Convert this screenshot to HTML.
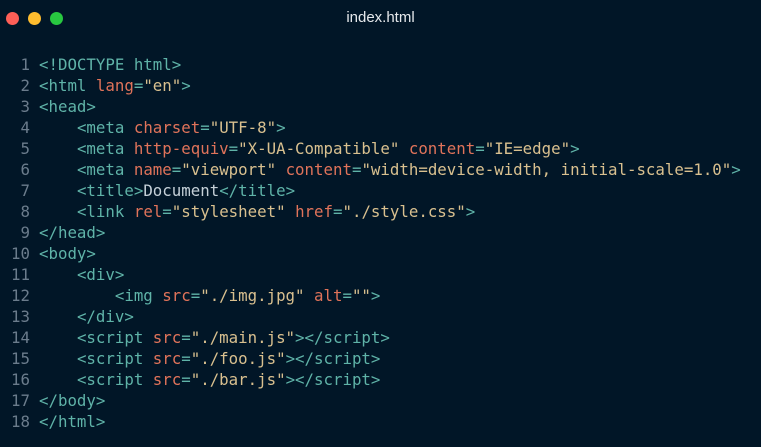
<!DOCTYPE html>
<html><head><style>
html,body{margin:0;padding:0;background:#011627;width:761px;height:447px;overflow:hidden}
.dot{position:absolute;top:12px;width:13px;height:13px;border-radius:50%}
.title{position:absolute;top:9px;left:0;width:761px;text-align:center;color:#e6e9ec;font:15px "Liberation Sans",sans-serif}
pre{position:absolute;left:0;top:54px;margin:0;font:15.76px/21px "DejaVu Sans Mono",monospace;color:#c5d0d8}
.n{display:inline-block;width:30px;text-align:right;color:#6b7c8c;margin-right:9px}
.t{color:#5fb3a8}.a{color:#e0735a}.s{color:#d9c08f}
</style></head><body>
<div class="dot" style="left:6px;background:#fe5f57"></div>
<div class="dot" style="left:28px;background:#febc2e"></div>
<div class="dot" style="left:50px;background:#28c840"></div>
<div class="title">index.html</div>
<pre><span class="n">1</span><span class="t">&lt;!DOCTYPE html&gt;</span>
<span class="n">2</span><span class="t">&lt;html </span><span class="a">lang</span><span class="t">=</span><span class="s">"en"</span><span class="t">&gt;</span>
<span class="n">3</span><span class="t">&lt;head&gt;</span>
<span class="n">4</span>    <span class="t">&lt;meta </span><span class="a">charset</span><span class="t">=</span><span class="s">"UTF-8"</span><span class="t">&gt;</span>
<span class="n">5</span>    <span class="t">&lt;meta </span><span class="a">http-equiv</span><span class="t">=</span><span class="s">"X-UA-Compatible"</span> <span class="a">content</span><span class="t">=</span><span class="s">"IE=edge"</span><span class="t">&gt;</span>
<span class="n">6</span>    <span class="t">&lt;meta </span><span class="a">name</span><span class="t">=</span><span class="s">"viewport"</span> <span class="a">content</span><span class="t">=</span><span class="s">"width=device-width, initial-scale=1.0"</span><span class="t">&gt;</span>
<span class="n">7</span>    <span class="t">&lt;title&gt;</span>Document<span class="t">&lt;/title&gt;</span>
<span class="n">8</span>    <span class="t">&lt;link </span><span class="a">rel</span><span class="t">=</span><span class="s">"stylesheet"</span> <span class="a">href</span><span class="t">=</span><span class="s">"./style.css"</span><span class="t">&gt;</span>
<span class="n">9</span><span class="t">&lt;/head&gt;</span>
<span class="n">10</span><span class="t">&lt;body&gt;</span>
<span class="n">11</span>    <span class="t">&lt;div&gt;</span>
<span class="n">12</span>        <span class="t">&lt;img </span><span class="a">src</span><span class="t">=</span><span class="s">"./img.jpg"</span> <span class="a">alt</span><span class="t">=</span><span class="s">""</span><span class="t">&gt;</span>
<span class="n">13</span>    <span class="t">&lt;/div&gt;</span>
<span class="n">14</span>    <span class="t">&lt;script </span><span class="a">src</span><span class="t">=</span><span class="s">"./main.js"</span><span class="t">&gt;&lt;/script&gt;</span>
<span class="n">15</span>    <span class="t">&lt;script </span><span class="a">src</span><span class="t">=</span><span class="s">"./foo.js"</span><span class="t">&gt;&lt;/script&gt;</span>
<span class="n">16</span>    <span class="t">&lt;script </span><span class="a">src</span><span class="t">=</span><span class="s">"./bar.js"</span><span class="t">&gt;&lt;/script&gt;</span>
<span class="n">17</span><span class="t">&lt;/body&gt;</span>
<span class="n">18</span><span class="t">&lt;/html&gt;</span></pre>
</body></html>
